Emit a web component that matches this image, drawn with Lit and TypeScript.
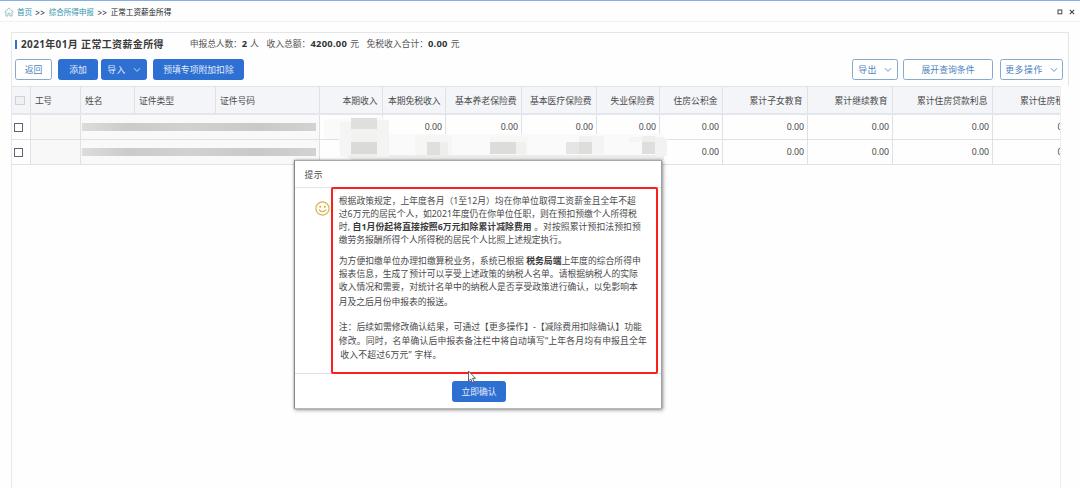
import { LitElement, html, css, svg } from "lit";
import { customElement, property } from "lit/decorators.js";

// A run of text that is tracked so that it fills a given width.
@customElement("fit-text")
class FitText extends LitElement {
  @property({ type: Number }) w = 0;
  static styles = css`
    :host { display: inline-block; white-space: nowrap; }
  `;
  render() {
    return html`<slot></slot>`;
  }
  firstUpdated() {
    const natural = this.getBoundingClientRect().width;
    const n = (this.textContent || "").trim().length;
    if (this.w && n > 1) this.style.letterSpacing = `${(this.w - natural) / (n - 1)}px`;
  }
}

interface Col { title: string; w: number; }

const NUM_COLS: Col[] = [
  { title: "本期收入", w: 35 },
  { title: "本期免税收入", w: 52.5 },
  { title: "基本养老保险费", w: 61.5 },
  { title: "基本医疗保险费", w: 61.5 },
  { title: "失业保险费", w: 44 },
  { title: "住房公积金", w: 44 },
  { title: "累计子女教育", w: 53 },
  { title: "累计继续教育", w: 53 },
  { title: "累计住房贷款利息", w: 70.5 },
];

const chevron = html`<svg class="chev" viewBox="0 0 8 6" width="8" height="6"><path d="M1 1.2 4 4.4 7 1.2" fill="none" stroke="currentColor" stroke-width="0.8"/></svg>`;

// x, y, width, height, fill
const PATCHES: [number, number, number, number, string][] = [
  [340, 122, 11, 34, "#f4f5f4"],
  [351, 118, 26, 11, "#dfdfde"],
  [377, 120, 12, 37, "#f4f4f3"],
  [351, 129, 26, 13, "#f2f2f1"],
  [351, 142, 26, 12, "#dadad9"],
  [351, 154, 26, 5, "#efefee"],
  [415, 135, 37, 20, "#f6f6f5"],
  [427, 142, 13, 13, "#dfdfdd"],
  [440, 142, 8, 13, "#eeeeed"],
  [490, 136, 38, 19, "#f7f7f6"],
  [490, 142, 26, 12, "#dcdcdb"],
  [516, 142, 10, 12, "#f0f0ef"],
  [566, 142, 13, 12, "#e5e5e4"],
  [579, 142, 13, 12, "#dddddc"],
  [592, 136, 12, 18, "#f4f4f4"],
  [579, 136, 13, 6, "#f1f1f0"],
  [629, 137, 13, 5, "#f5f5f5"],
  [642, 142, 13, 12, "#dededd"],
  [642, 136, 13, 6, "#eeeeed"],
];

@customElement("app-root")
class AppRoot extends LitElement {
  static styles = css`
    :host {
      display: block; position: relative; box-sizing: border-box;
      width: 1080px; height: 488px; overflow: hidden; background: #fefefe;
      border-top: 1px solid #86afe5;
      font: 8.8px/13px "Noto Sans", "Noto Sans CJK SC", sans-serif; color: #4c4c4c;
    }
    * { box-sizing: border-box; }
    svg { display: block; flex: none; }
    .crumbs {
      display: flex; align-items: center; height: 21px; padding: 2px 5px 0 4px;
      border-bottom: 1px solid #f1f1f1; font-size: 7.6px; color: #222;
    }
    .crumbs .link { color: #3094ac; }
    .crumbs .home { margin-right: 3px; }
    .crumbs .sep { font-size: 8px; margin: 0 3.5px; }
    .winbtns { display: flex; margin-left: auto; gap: 6px; }
    .panel { margin: 10px 11px 0; height: 456px; display: flex; flex-direction: column; border-left: 1px solid #e6e8ea; }
    .top { height: 54px; border-top: 1px solid #e3e5e7; border-right: 1px solid #e3e5e7; padding-right: 5px; }
    .title { display: flex; align-items: center; height: 22px; padding: 1px 0 0 3px; color: #555; }
    .title .bar { width: 2px; height: 9px; background: #2f70d4; margin-right: 4px; }
    .title .name { font-size: 10px; font-weight: 700; color: #3a3a3a; margin-right: 26px; white-space: pre; }
    .stat { display: flex; align-items: center; margin-right: 7.5px; }
    .stat b { font-size: 9.4px; color: #333; margin-right: 3px; padding-bottom: 2px; }
    .tools { display: flex; height: 21px; margin-top: 4px; padding-left: 3px; }
    .btn {
      display: flex; align-items: center; justify-content: center; height: 21px;
      border: 1px solid #86a9cf; border-radius: 2.5px; background: #fff; color: #4a84bd; gap: 7px; padding-top: 1px;
    }
    .btn.fill { background: #2e6fd2; border-color: #2e6fd2; color: #e3edfb; }
    .b1 { width: 37px; margin-right: 6px; } .b2 { width: 40px; margin-right: 3px; } .b3 { width: 46px; margin-right: 6px; } .b4 { width: 91px; margin-right: auto; }
    .b5 { width: 46px; margin-right: 5px; } .b6 { width: 90px; margin-right: 7px; } .b7 { width: 63px; }
    .table { width: 1049px; height: 402px; border-right: 1px solid #eceeef; overflow: hidden; }
    .row {
      display: grid; height: 25px; border-bottom: 1px solid #dfe1e3; background: #fefefe;
      grid-template-columns: 19px 50px 54px 81px 104px 63px 63px 76px 75px 63px 63px 85px 85px 100px 90px;
    }
    .row > div { display: flex; align-items: center; border-right: 1px solid #dfe1e3; white-space: nowrap; min-width: 0; }
    .row.head { height: 29px; background: #f3f5f8; border-top: 1px solid #e1e4e8; border-bottom: 2px solid #e3e6ea; }
    .row.head > div { padding-top: 2px; }
    .head > div { padding-left: 4px; }
    .row > .num { justify-content: flex-end; padding: 0 3px 0 0; }
    .head > .num { padding-right: 4.5px; }
    .row > .last { padding-left: 64.5px; }
    .head > .last { padding-left: 27px; }
    .row > .id { background: #f8f8f8; }
    .row > .merged { grid-column: span 3; padding: 0 3px 0 1px; background: #f9f9f9; }
    .masked { width: 100%; height: 8px; background: linear-gradient(90deg, #dcdcdc, #cbcbcb 20%, #d1d1d1 45%, #c9c9c9 75%, #d2d2d2); }
    .row > .check { padding-left: 2px; }
    .box { width: 9px; height: 9px; border: 1px solid #5e6474; background: #fff; }
    .row.head > .check { padding-left: 3px; padding-top: 0; }
    .head .box { width: 10px; height: 9px; border-color: #cfd2d6; background: #f1f1f1; }
    .mosaic { position: absolute; left: 0; top: -1px; }
    .dialog {
      position: absolute; left: 294px; top: 159px; width: 368px; height: 249px; background: #fff;
      border-left: 1px solid #858585; border-right: 1px solid #a0a0a0; border-bottom: 1px solid #b8b8b8; border-top: 1px solid #a9a9a9;
      box-shadow: 1px 1px 4px rgba(0,0,0,.4), 0 0 2px rgba(0,0,0,.25); display: flex; flex-direction: column;
    }
    .dhead { height: 27px; border-bottom: 1px solid #e6e6e6; padding: 8px 0 0 9.5px; }
    .dbody { flex: 1; display: flex; align-items: flex-start; margin-top: -1px; min-height: 0; }
    .face { margin: 14px 2px 0 19.5px; }
    .frame { position: relative; z-index: 1; width: 327px; height: 187px; margin-left: -0.5px; border: 2px solid #fb2019; border-radius: 2px; padding: 6px 0 0 5.8px; color: #4a4a4a; }
    .frame p { margin: 0; display: flex; flex-direction: column; align-items: flex-start; }
    .frame b { color: #3a3a3a; }
    .p1 { line-height: 13px; } .p2 { line-height: 13px; }
    .frame .p2 { margin-top: 8px; } .frame .p2 .end { line-height: 16px; }
    .frame .p3 { margin-top: 10px; line-height: 14px; } .p3 .end { margin-left: 1.5px; }
    .dfoot { height: 35px; border-top: 1px solid #e2e2e2; display: flex; justify-content: center; padding: 7px 0 0 2px; margin-top: -1px; }
    .dfoot .btn { width: 54px; }
    .cursor { position: absolute; left: 467px; top: 369px; z-index: 2; }
  `;

  private row() {
    return html`<div class="row">
      <div class="check"><span class="box"></span></div>
      <div class="id"></div>
      <div class="merged"><span class="masked"></span></div>
      <div></div>
      ${NUM_COLS.slice(1).map(() => html`<div class="num"><fit-text w="17.3">0.00</fit-text></div>`)}
      <div class="last">0.00</div>
    </div>`;
  }

  render() {
    return html`
      <div class="crumbs">
        <svg class="home" width="10" height="10" viewBox="0 0 10 10"><path d="M.6 5.2 5 .9 9.4 5.2M1.9 4.2V9H4V6.3H6V9H8.1V4.2" fill="none" stroke="#8db4bd" stroke-width=".8" stroke-linejoin="round"/></svg>
        <fit-text class="link" w="15">首页</fit-text>
        <fit-text class="sep" w="9.5">&gt;&gt;</fit-text>
        <fit-text class="link" w="45.3">综合所得申报</fit-text>
        <fit-text class="sep" w="9.5">&gt;&gt;</fit-text>
        <fit-text w="60.5">正常工资薪金所得</fit-text>
        <span class="winbtns">
          <svg width="6" height="6" viewBox="0 0 6 6"><rect x="1" y="1" width="3.8" height="3.8" fill="none" stroke="#555" stroke-width="1.1"/></svg>
          <svg width="6" height="6" viewBox="0 0 6 6"><path d="M.8.8 5.2 5.2M5.2.8.8 5.2" stroke="#444" stroke-width="1.1"/></svg>
        </span>
      </div>
      <div class="panel">
        <div class="top">
          <div class="title">
            <span class="bar"></span>
            <fit-text class="name" w="142.5">2021年01月 正常工资薪金所得</fit-text>
            <span class="stat"><fit-text w="52">申报总人数：</fit-text><b>2</b><fit-text>人</fit-text></span>
            <span class="stat"><fit-text w="44">收入总额：</fit-text><b><fit-text w="36.5">4200.00</fit-text></b><fit-text>元</fit-text></span>
            <span class="stat"><fit-text w="61.5">免税收入合计：</fit-text><b><fit-text w="19.5">0.00</fit-text></b><fit-text>元</fit-text></span>
          </div>
          <div class="tools">
            <div class="btn b1"><fit-text w="17.5">返回</fit-text></div>
            <div class="btn fill b2"><fit-text w="17.5">添加</fit-text></div>
            <div class="btn fill b3"><fit-text w="18">导入</fit-text>${chevron}</div>
            <div class="btn fill b4"><fit-text w="70.5">预填专项附加扣除</fit-text></div>
            <div class="btn b5"><fit-text w="18">导出</fit-text>${chevron}</div>
            <div class="btn b6"><fit-text w="53">展开查询条件</fit-text></div>
            <div class="btn b7"><fit-text w="37">更多操作</fit-text>${chevron}</div>
          </div>
        </div>
        <div class="table">
          <div class="row head">
            <div class="check"><span class="box"></span></div>
            <div><fit-text w="17">工号</fit-text></div>
            <div><fit-text w="17.5">姓名</fit-text></div>
            <div><fit-text w="35">证件类型</fit-text></div>
            <div><fit-text w="35">证件号码</fit-text></div>
            ${NUM_COLS.map((c) => html`<div class="num"><fit-text w=${c.w}>${c.title}</fit-text></div>`)}
            <div class="last">累计住房租金</div>
          </div>
          ${this.row()}${this.row()}
        </div>
      </div>
      <svg class="mosaic" width="1080" height="165" viewBox="0 0 1080 165">
        <path d="M326 119H345Q350 117 356 117H380Q389 119 389 126V134H660Q667 136 667 143V155Q665 160 655 160H350Q339 156 339 146V139H324V121Z" fill="#fafafa"/>
        <path d="M346 155H664V160H352Z" fill="#ececec"/>
        ${PATCHES.map(([x, y, w, h, f]) => svg`<rect x=${x} y=${y} width=${w} height=${h} fill=${f}/>`)}
        <path d="M655 137H662Q667 138 667 144V154Q666 157 661 157H655Z" fill="#f2f2f1"/>
      </svg>
      <div class="dialog">
        <div class="dhead"><fit-text w="18">提示</fit-text></div>
        <div class="dbody">
          <svg class="face" width="15" height="15" viewBox="0 0 15 15"><circle cx="7.5" cy="7.5" r="6.6" fill="#fffdf4" stroke="#d6b14d" stroke-width="1.2"/><circle cx="5.2" cy="5.7" r=".95" fill="#cfa63c"/><circle cx="9.8" cy="5.7" r=".95" fill="#cfa63c"/><path d="M4 8.7Q7.5 12.8 11 8.7" fill="none" stroke="#cfa63c" stroke-width="1.1"/></svg>
          <div class="frame">
            <p class="p1">
              <fit-text w="297">根据政策规定，上年度各月（1至12月）均在你单位取得工资薪金且全年不超</fit-text>
              <fit-text w="298">过6万元的居民个人，如2021年度仍在你单位任职，则在预扣预缴个人所得税</fit-text>
              <fit-text w="302">时, <b>自1月份起将直接按照6万元扣除累计减除费用 </b>。对按照累计预扣法预扣预</fit-text>
              <fit-text w="228">缴劳务报酬所得个人所得税的居民个人比照上述规定执行。</fit-text>
            </p>
            <p class="p2">
              <fit-text w="302">为方便扣缴单位办理扣缴算税业务，系统已根据 <b>税务局端</b>上年度的综合所得申</fit-text>
              <fit-text w="299">报表信息，生成了预计可以享受上述政策的纳税人名单。请根据纳税人的实际</fit-text>
              <fit-text w="299">收入情况和需要，对统计名单中的纳税人是否享受政策进行确认，以免影响本</fit-text>
              <fit-text class="end" w="114">月及之后月份申报表的报送。</fit-text>
            </p>
            <p class="p3">
              <fit-text w="303">注：后续如需修改确认结果，可通过【更多操作】-【减除费用扣除确认】功能</fit-text>
              <fit-text w="308">修改。同时，名单确认后申报表备注栏中将自动填写“上年各月均有申报且全年</fit-text>
              <fit-text class="end" w="101">收入不超过6万元” 字样。</fit-text>
            </p>
          </div>
        </div>
        <div class="dfoot"><div class="btn fill"><fit-text w="35">立即确认</fit-text></div></div>
      </div>
      <svg class="cursor" width="10" height="14" viewBox="0 0 10 14"><path d="M1.5 1V11L3.8 9 5.3 12.6 7 11.9 5.6 8.4H8.5Z" fill="#fff" stroke="#555" stroke-width=".9"/></svg>
    `;
  }
}
